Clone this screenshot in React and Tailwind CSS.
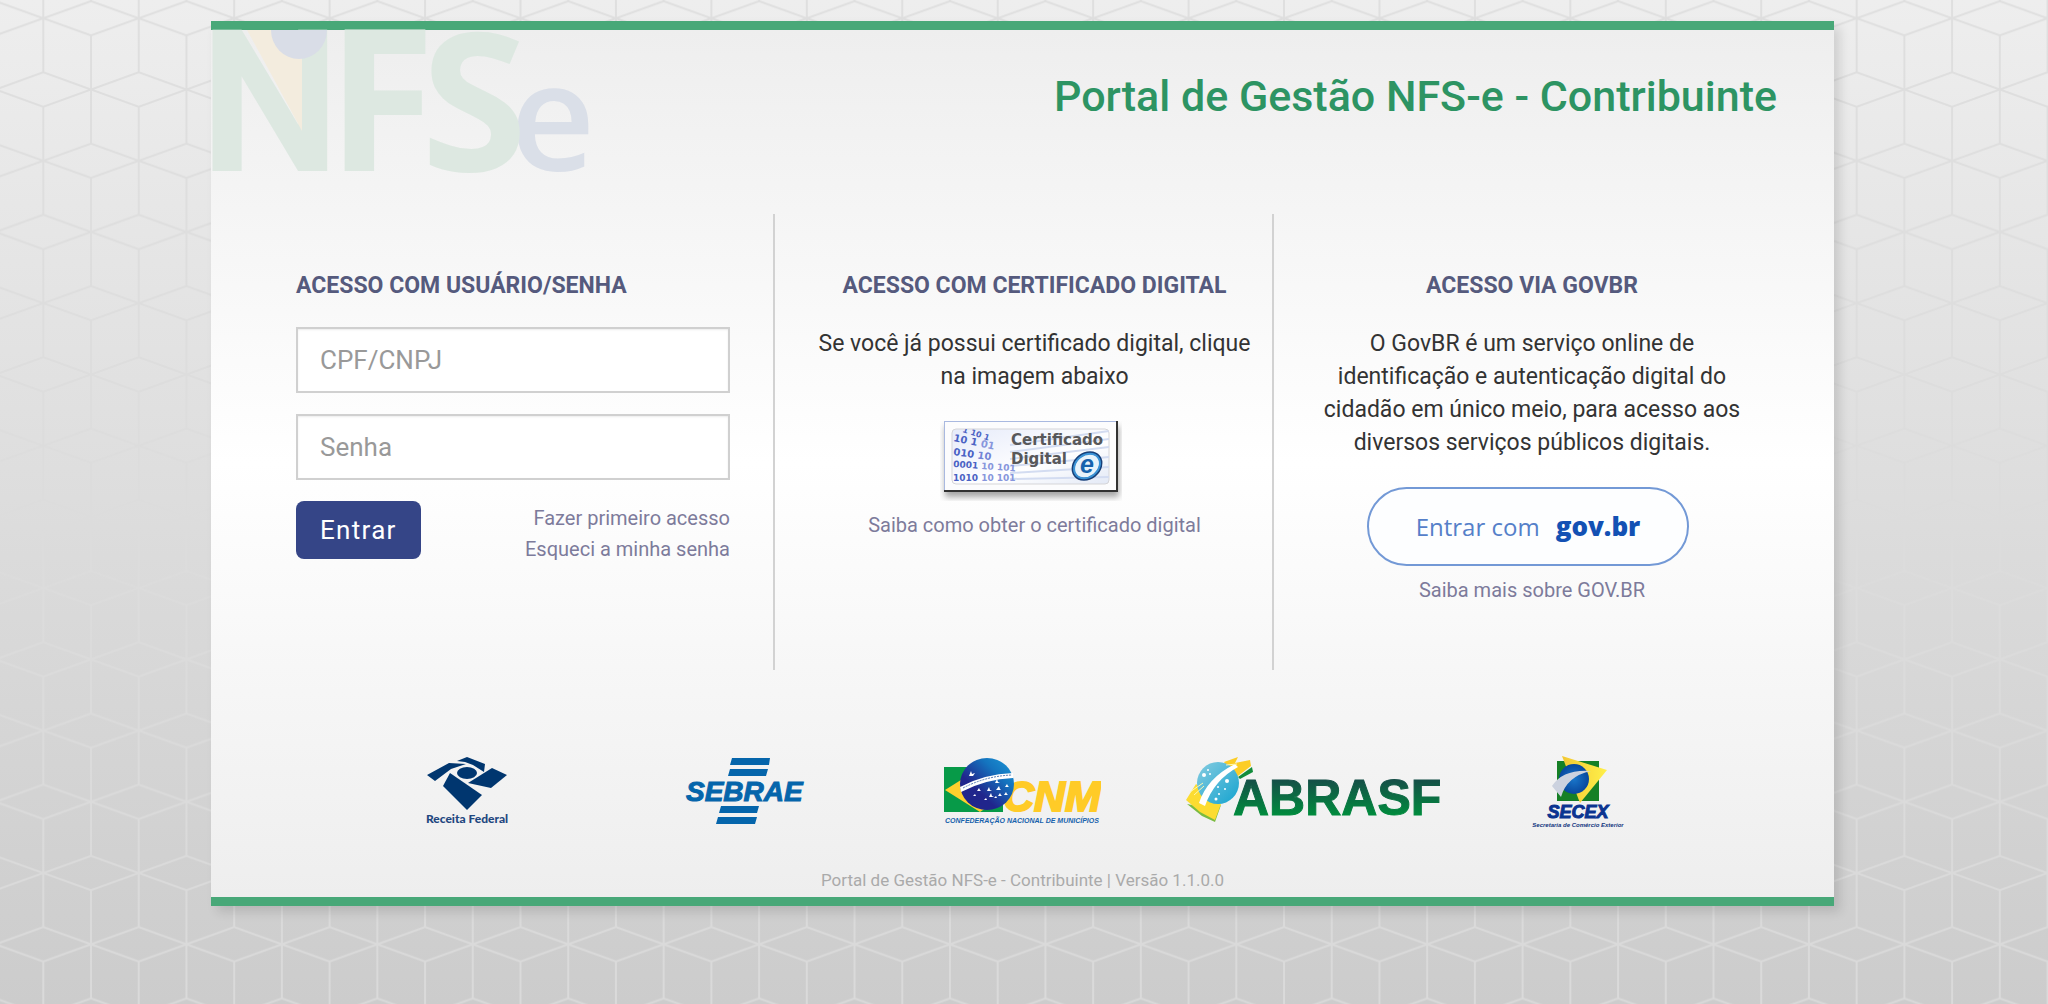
import React, { useState } from "react";

const Background = () => (
  <svg className="absolute inset-0 h-full w-full" aria-hidden="true">
    <defs>
      <pattern id="cubes" x="43.3" y="18.3" width="95.44" height="142.46" patternUnits="userSpaceOnUse">
        <g fill="none" stroke="#dcdcdc" strokeWidth="2">
          <path d="M0 0 47.72 17.2 95.44 0M0 142.46 47.72 125.26 95.44 142.46" />
          <path d="M0 54 47.72 71.23 0 88.4M95.44 54 47.72 71.23 95.44 88.4" />
          <path d="M0 0V54M0 88.4V142.46M95.44 0V54M95.44 88.4V142.46M47.72 17.2V125.26" />
        </g>
      </pattern>
    </defs>
    <rect width="100%" height="100%" fill="url(#cubes)" opacity="0.85" />
  </svg>
);

const Watermark = () => (
  <svg
    width="400"
    height="150"
    viewBox="0 0 400 150"
    aria-hidden="true"
    className="shrink-0 overflow-visible font-['Open_Sans'] font-bold"
  >
    <text x="299" y="141" fontSize="148" fontWeight="600" fill="#dadfe8">e</text>
    <g fill="#dde8e1">
      <text x="-11" y="141" fontSize="198" fontFamily="Roboto">N</text>
      <text x="116" y="141" fontSize="197">F</text>
      <text x="210" y="141" fontSize="193">S</text>
    </g>
    <path d="M36 0H91V101Z" fill="#f3ecde" />
    <path d="M60 0A28 29 0 0 0 116 0Z" fill="#d9dde7" />
  </svg>
);

const CertificadoImage = () => (
  <svg width="182" height="80" viewBox="0 0 182 80" aria-hidden="true">
    <defs>
      <filter id="certShadow" x="-10%" y="-10%" width="120%" height="130%">
        <feDropShadow dx="1" dy="5" stdDeviation="3" floodOpacity="0.35" />
      </filter>
      <linearGradient id="certBg" x1="0" x2="1" y1="0" y2="1">
        <stop offset="0" stopColor="#e6ebfa" />
        <stop offset="0.6" stopColor="#ffffff" />
        <stop offset="1" stopColor="#e3e9f6" />
      </linearGradient>
      <clipPath id="certClip">
        <rect x="12" y="8" width="157" height="55" rx="4" />
      </clipPath>
    </defs>
    <rect x="4" y="0" width="174" height="71" fill="#333" filter="url(#certShadow)" />
    <rect x="4" y="0" width="172" height="69" fill="#a9b9e0" />
    <rect x="5" y="1" width="171" height="68" fill="#fcfcfd" />
    <rect x="12" y="8" width="157" height="55" rx="4" fill="url(#certBg)" stroke="#d5d5d8" />
    <g clipPath="url(#certClip)">
      <path
        d="M70 24 169 10M70 31 169 18M70 38 169 26M70 45 169 36M70 52 169 46M70 58 169 56"
        stroke="#d3dcf1"
        strokeWidth="2"
      />
      <g fontFamily="DejaVu Sans" fontWeight="bold" fill="#4a62c4">
        <text x="22" y="11" fontSize="8" transform="rotate(18 22 11)">1 10 1</text>
        <text x="13" y="20" fontSize="10" transform="rotate(12 13 20)">10 1 <tspan fill="#8796dc">01</tspan></text>
        <text x="13" y="34" fontSize="10" transform="rotate(8 13 34)">010 <tspan fill="#7384d6">10</tspan></text>
        <text x="13" y="46" fontSize="9" transform="rotate(4 13 46)">0001 <tspan fill="#8796dc">10 101</tspan></text>
        <text x="13" y="60" fontSize="9">1010 <tspan fill="#8796dc">10 101</tspan></text>
      </g>
    </g>
    <g fontFamily="DejaVu Sans" fontWeight="bold" fontSize="15" fill="#58585a">
      <text x="71" y="24">Certificado</text>
      <text x="71" y="43">Digital</text>
    </g>
    <ellipse cx="147" cy="45" rx="15" ry="12" fill="#e8f3fb" stroke="#173f78" strokeWidth="3" transform="rotate(-38 147 45)" />
    <ellipse cx="147" cy="45" rx="14" ry="11" fill="none" stroke="#3b93d6" strokeWidth="2" transform="rotate(-38 147 45)" />
    <text x="140" y="52" fontFamily="Liberation Sans" fontWeight="bold" fontStyle="italic" fontSize="25" fill="#1763ad">e</text>
  </svg>
);

const ReceitaFederal = () => (
  <svg width="84" height="76" viewBox="0 0 84 76" role="img" aria-label="Receita Federal">
    <g fill="#00366f">
      <path d="M2 21 24 9 41 10 32 13 26 15 10 27Z" />
      <path d="M32 7 42 3 60 10 59 18 48 11 40 8Z" />
      <ellipse cx="42" cy="19" rx="10" ry="6" />
      <path d="M43 29 67 14 82 21 66 34Z" />
      <path d="M25 19 57 41 42 56 18 32Z" />
    </g>
    <text x="42" y="69" textAnchor="middle" fontFamily="Lato" fontWeight="900" fontSize="12" fill="#1f4780">
      Receita Federal
    </text>
  </svg>
);

const Sebrae = () => (
  <svg width="120" height="76" viewBox="0 0 120 76" role="img" aria-label="SEBRAE">
    <g fill="#0565ab">
      <path d="M47 4H85L84 11H45ZM45 15H83L81 22H43ZM36 52H74L72 59H34ZM33 63H72L70 70H31Z" />
      <text x="1" y="47" fontFamily="Liberation Sans" fontWeight="bold" fontStyle="italic" fontSize="28" stroke="#0565ab" strokeWidth="1">
        SEBRAE
      </text>
    </g>
  </svg>
);

const Cnm = () => (
  <svg width="158" height="76" viewBox="0 0 158 76" role="img" aria-label="CNM">
    <defs>
      <linearGradient id="cnmGlobe" x1="0" x2="1" y1="1" y2="0">
        <stop offset="0.35" stopColor="#20258c" />
        <stop offset="0.7" stopColor="#1474bf" />
        <stop offset="1" stopColor="#1c9ad8" />
      </linearGradient>
    </defs>
    <rect x="1" y="13" width="59" height="45" fill="#079a48" />
    <path d="M2 36 37 14 70 36 37 58Z" fill="#ffd02d" />
    <text
      x="60"
      y="57"
      fontFamily="Liberation Sans"
      fontWeight="bold"
      fontStyle="italic"
      fontSize="43"
      fill="#ffcb27"
      stroke="#ffcb27"
      strokeWidth="2"
    >
      CNM
    </text>
    <ellipse cx="44" cy="30" rx="27" ry="26" fill="url(#cnmGlobe)" />
    <path d="M17 33Q41 20 70 19V24Q43 25 18 38Z" fill="#fff" />
    <path d="M20 34Q43 22 69 21" fill="none" stroke="#5077b2" strokeWidth="1" strokeDasharray="2 1" />
    <g fill="#fff">
      <path d="m28 17 1 3 3-1-2 3-4 0ZM54 25l1 3 2 1h-5ZM46 33l1 3 2 1h-5ZM56 32l1 3 1 1h-5ZM48 39l1 3 2 1h-5ZM57 39l1 2 1 1h-4ZM64 30l1 2 1 1h-4ZM63 38l1 2 1 1h-4ZM36 34l1 2 1 1h-4ZM32 40l1 2h-3ZM43 44l1 2h-3ZM53 42l1 2h-3Z" />
    </g>
    <text x="79" y="69" textAnchor="middle" fontFamily="Liberation Sans" fontWeight="bold" fontStyle="italic" fontSize="7" fill="#1762ac">
      CONFEDERAÇÃO NACIONAL DE MUNICÍPIOS
    </text>
  </svg>
);

const Abrasf = () => (
  <svg width="284" height="76" viewBox="0 0 284 76" role="img" aria-label="ABRASF">
    <defs>
      <linearGradient id="abrasfText" x1="0" x2="0" y1="25" y2="61" gradientUnits="userSpaceOnUse">
        <stop offset="0" stopColor="#164e48" />
        <stop offset="1" stopColor="#008b3d" />
      </linearGradient>
      <linearGradient id="abrasfGlobe" x1="0" x2="1" y1="0" y2="1">
        <stop offset="0" stopColor="#86cce0" />
        <stop offset="1" stopColor="#14a3cf" />
      </linearGradient>
    </defs>
    <path d="M29 50 44 62 57 68 63 51 55 55Z" fill="#7bbb41" />
    <path d="M28 46 38 30 63 50 57 66 42 58Z" fill="#fcdc31" />
    <path d="M66 8 80 3 77 9 92 6 93 12 76 25Z" fill="#fccd25" />
    <path d="M80 23 94 13 95 18 82 25Z" fill="#118c3b" />
    <circle cx="60" cy="29" r="21" fill="url(#abrasfGlobe)" />
    <path d="M41 49Q49 24 77 10L80 13Q56 26 47 52Z" fill="#fff" />
    <path d="M32 38 45 29M36 41 46 32M68 11 79 10" stroke="#fff7b0" strokeWidth="1" />
    <g fill="#fff">
      <circle cx="46" cy="21" r="2" />
      <circle cx="52" cy="20" r="1" />
      <circle cx="50" cy="16" r="1" />
      <circle cx="69" cy="27" r="2" />
      <circle cx="60" cy="33" r="1" />
      <circle cx="67" cy="35" r="1" />
      <circle cx="61" cy="40" r="1" />
      <circle cx="58" cy="45" r="1.5" />
    </g>
    <text x="75" y="61" fontFamily="Liberation Sans" fontWeight="bold" fontSize="50" fill="url(#abrasfText)" stroke="url(#abrasfText)">
      ABRASF
    </text>
  </svg>
);

const Secex = () => (
  <svg width="92" height="76" viewBox="0 0 92 76" role="img" aria-label="SECEX">
    <defs>
      <linearGradient id="secexYellow" x1="0" x2="1">
        <stop offset="0" stopColor="#f3c832" />
        <stop offset="1" stopColor="#fff04a" />
      </linearGradient>
      <radialGradient id="secexGlobe">
        <stop offset="0" stopColor="#1976ca" />
        <stop offset="1" stopColor="#08479d" />
      </radialGradient>
    </defs>
    <rect x="25" y="7" width="42" height="40" fill="#168026" />
    <path d="M30 2 75 16 48 49Z" fill="url(#secexYellow)" />
    <circle cx="42" cy="25" r="15" fill="url(#secexGlobe)" />
    <path d="M59 17Q31 15 20 32L29 43Q35 22 59 17Z" fill="#ccd2df" />
    <text x="46" y="64" textAnchor="middle" fontFamily="Liberation Sans" fontWeight="bold" fontStyle="italic" fontSize="18" fill="#0b3490" stroke="#0b3490">
      SECEX
    </text>
    <text x="46" y="73" textAnchor="middle" fontFamily="Liberation Sans" fontWeight="bold" fontStyle="italic" fontSize="6" fill="#12367f">
      Secretaria de Comércio Exterior
    </text>
  </svg>
);

const logos = [ReceitaFederal, Sebrae, Cnm, Abrasf, Secex];

const Title = ({ children }) => (
  <h2 className="mb-[25px] text-[23px] leading-[33px] font-bold whitespace-nowrap text-[#555a7d]">{children}</h2>
);

const Field = ({ id, label, type, value, onChange }) => (
  <>
    <label htmlFor={id} className="sr-only">{label}</label>
    <input
      id={id}
      type={type}
      placeholder={label}
      value={value}
      onChange={(e) => onChange(e.target.value)}
      className="mb-[21px] block h-[66px] w-full border-2 border-[#d0d0d0] bg-white px-[22px] text-[26px] text-[#555] shadow-[inset_0_1px_2px_rgba(0,0,0,0.08)] outline-none placeholder:text-[#999] focus:border-[#354587]"
    />
  </>
);

const App = () => {
  const [user, setUser] = useState("");
  const [password, setPassword] = useState("");

  return (
    <div className="relative min-h-screen bg-linear-to-b from-[#eeeeee] to-[#cccccc] pt-[21px] pb-[98px] font-['Roboto',sans-serif]">
      <Background />
      <main className="relative mr-[214px] ml-[211px] border-y-[9px] border-[#48a878] bg-linear-to-b from-[#eeeeee] via-white to-[#eeeeee] shadow-[6px_6px_10px_rgba(0,0,0,0.12)]">
        <header className="flex h-[184px] justify-between pr-[57px]">
          <Watermark />
          <h1 className="pt-10 text-[43px] leading-[52px] font-medium text-[#2d9463]">
            Portal de Gestão NFS-e - Contribuinte
          </h1>
        </header>

        <div className="grid min-h-[456px] grid-cols-[562fr_501fr_560fr]">
          <form className="pt-[55px] pr-[43px] pl-[85px]" onSubmit={(e) => e.preventDefault()}>
            <Title>ACESSO COM USUÁRIO/SENHA</Title>
            <Field id="user" label="CPF/CNPJ" type="text" value={user} onChange={setUser} />
            <Field id="password" label="Senha" type="password" value={password} onChange={setPassword} />
            <div className="flex items-start justify-between">
              <button type="submit" className="h-[58px] rounded-lg bg-[#354587] px-6 text-[26px] tracking-wider text-white">
                Entrar
              </button>
              <div className="flex flex-col pt-0.5 text-right text-[20px] leading-[31px] text-[#7d7b9b]">
                <a href="#primeiro-acesso">Fazer primeiro acesso</a>
                <a href="#esqueci-senha">Esqueci a minha senha</a>
              </div>
            </div>
          </form>

          <section className="flex flex-col items-center border-x-2 border-[#d2d2d2] pt-[55px] pr-[15px] pl-[37px] text-center">
            <Title>ACESSO COM CERTIFICADO DIGITAL</Title>
            <p className="text-[23px] leading-[33px] text-[#333]">
              Se você já possui certificado digital, clique na imagem abaixo
            </p>
            <button type="button" aria-label="Certificado Digital" className="mt-7 mr-2 mb-2">
              <CertificadoImage />
            </button>
            <a href="#certificado" className="text-[20px] leading-8 text-[#7d7b9b]">
              Saiba como obter o certificado digital
            </a>
          </section>

          <section className="flex flex-col items-center pt-[55px] pr-[85px] pl-[41px] text-center">
            <Title>ACESSO VIA GOVBR</Title>
            <p className="text-[23px] leading-[33px] text-[#333]">
              O GovBR é um serviço online de identificação e autenticação digital do cidadão em único meio, para acesso
              aos diversos serviços públicos digitais.
            </p>
            <button
              type="button"
              className="mt-7 mr-2 mb-2 flex h-[79px] w-[322px] items-center justify-center gap-4 rounded-full border-2 border-[#7399d6] bg-[#fdfeff] font-['Open_Sans']"
            >
              <span className="text-[24px] text-[#5580c9]">Entrar com</span>
              <span className="text-[26px] font-extrabold text-[#1351b4]">gov.br</span>
            </button>
            <a href="#govbr" className="text-[20px] leading-8 text-[#7d7b9b]">
              Saiba mais sobre GOV.BR
            </a>
          </section>
        </div>

        <div className="grid grid-cols-5 justify-items-center px-[117px] pt-[84px]">
          {logos.map((Logo, index) => (
            <Logo key={index} />
          ))}
        </div>

        <footer className="mt-[38px] pb-[5px] text-center text-[17px] leading-6 text-[#aaa]">
          Portal de Gestão NFS-e - Contribuinte | Versão 1.1.0.0
        </footer>
      </main>
    </div>
  );
};

export default App;
